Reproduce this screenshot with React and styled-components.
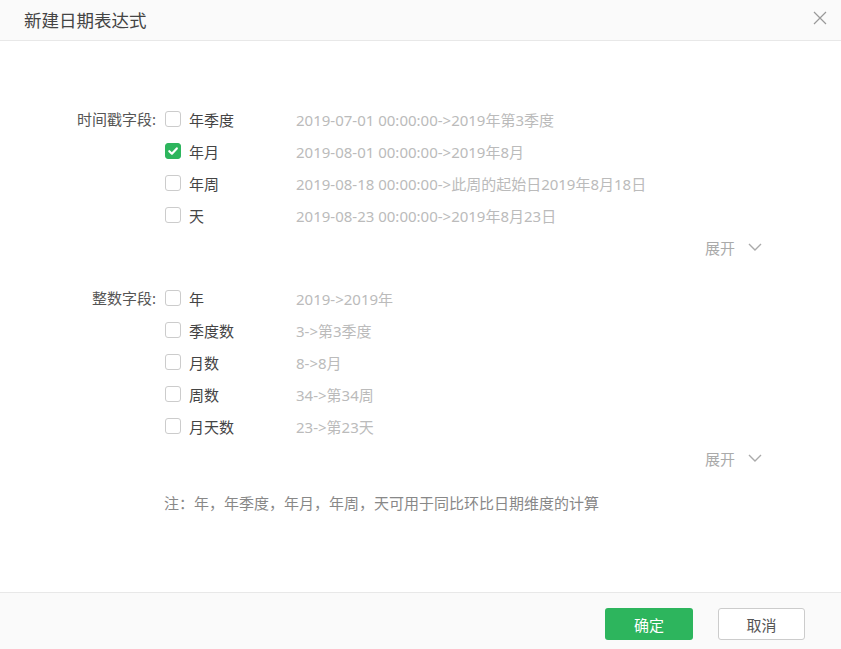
import React, { useState } from "react";
import styled, { createGlobalStyle } from "styled-components";

const GlobalStyle = createGlobalStyle`
  html, body {
    margin: 0;
    padding: 0;
    background: #fff;
  }
  body {
    font-family: "Noto Sans", "Noto Sans CJK SC", sans-serif;
    font-size: 15px;
    color: #333;
  }
`;

const timestampFields = [
  { name: "年季度", example: "2019-07-01 00:00:00->2019年第3季度" },
  { name: "年月", example: "2019-08-01 00:00:00->2019年8月", checked: true },
  { name: "年周", example: "2019-08-18 00:00:00->此周的起始日2019年8月18日" },
  { name: "天", example: "2019-08-23 00:00:00->2019年8月23日" },
];

const integerFields = [
  { name: "年", example: "2019->2019年" },
  { name: "季度数", example: "3->第3季度" },
  { name: "月数", example: "8->8月" },
  { name: "周数", example: "34->第34周" },
  { name: "月天数", example: "23->第23天" },
];

function Checkbox({ checked, onClick }) {
  return (
    <Box $checked={checked} onClick={onClick}>
      {checked && (
        <svg width="12" height="12" viewBox="0 0 12 12">
          <path
            d="M2.3 6.2 L4.9 8.7 L9.8 3.4"
            fill="none"
            stroke="#fff"
            strokeWidth="2.2"
            strokeLinecap="round"
            strokeLinejoin="round"
          />
        </svg>
      )}
    </Box>
  );
}

function FieldGroup({ label, fields }) {
  const [state, setState] = useState(fields.map((f) => !!f.checked));
  const toggle = (i) => setState((s) => s.map((v, j) => (j === i ? !v : v)));

  return (
    <Group>
      <GroupLabel>{label}</GroupLabel>
      <Options>
        {fields.map((f, i) => (
          <OptionRow key={f.name}>
            <Checkbox checked={state[i]} onClick={() => toggle(i)} />
            <OptionName>{f.name}</OptionName>
            <Example>{f.example}</Example>
          </OptionRow>
        ))}
        <ExpandRow>
          <span>展开</span>
          <svg width="16" height="10" viewBox="0 0 16 10">
            <path d="M2 2 L8 8 L14 2" fill="none" stroke="#aaa" strokeWidth="1.4" />
          </svg>
        </ExpandRow>
      </Options>
    </Group>
  );
}

export default function App() {
  return (
    <>
      <GlobalStyle />
      <Dialog>
        <Header>
          <Title>新建日期表达式</Title>
          <CloseButton>
            <svg width="14" height="14" viewBox="0 0 14 14">
              <path d="M1 1 L13 13 M13 1 L1 13" stroke="#999" strokeWidth="1.2" />
            </svg>
          </CloseButton>
        </Header>
        <Body>
          <FieldGroup label="时间戳字段:" fields={timestampFields} />
          <FieldGroup label="整数字段:" fields={integerFields} />
          <Note>注：年，年季度，年月，年周，天可用于同比环比日期维度的计算</Note>
        </Body>
        <Footer>
          <PrimaryButton>确定</PrimaryButton>
          <DefaultButton>取消</DefaultButton>
        </Footer>
      </Dialog>
    </>
  );
}

const Dialog = styled.div`
  width: 841px;
  height: 649px;
  display: flex;
  flex-direction: column;
  background: #fff;
`;

const Header = styled.div`
  height: 40px;
  flex-shrink: 0;
  display: flex;
  align-items: center;
  justify-content: space-between;
  padding: 0 14px 0 24px;
  background: #fafafa;
  border-bottom: 1px solid #e8e8e8;
`;

const Title = styled.div`
  font-size: 17.5px;
  color: #444;
  margin-top: -2px;
`;

const CloseButton = styled.div`
  width: 14px;
  height: 14px;
  display: flex;
  cursor: pointer;
  margin-top: -4px;
`;

const Body = styled.div`
  flex: 1;
  padding-top: 62px;
  display: flex;
  flex-direction: column;
  gap: 19px;
`;

const Group = styled.div`
  display: flex;
  align-items: flex-start;
`;

const GroupLabel = styled.div`
  width: 156px;
  height: 32px;
  line-height: 32px;
  text-align: right;
  color: #555;
`;

const Options = styled.div`
  margin-left: 9px;
  width: 598px;
  display: flex;
  flex-direction: column;
`;

const OptionRow = styled.div`
  height: 32px;
  display: flex;
  align-items: center;
`;

const Box = styled.span`
  width: 16px;
  height: 16px;
  box-sizing: border-box;
  flex-shrink: 0;
  border-radius: 3px;
  border: 1px solid ${(p) => (p.$checked ? "#2db55d" : "#ccc")};
  background: ${(p) => (p.$checked ? "#2db55d" : "#fff")};
  display: flex;
  align-items: center;
  justify-content: center;
  cursor: pointer;
`;

const OptionName = styled.span`
  width: 107px;
  margin-left: 8px;
  color: #444;
`;

const Example = styled.span`
  color: #bbb;
`;

const ExpandRow = styled.div`
  height: 32px;
  display: flex;
  align-items: center;
  justify-content: flex-end;
  gap: 12px;
  color: #aaa;
`;

const Note = styled.div`
  padding-left: 164px;
  line-height: 20px;
  color: #888;
`;

const Footer = styled.div`
  height: 57px;
  flex-shrink: 0;
  border-top: 1px solid #e8e8e8;
  background: #fafafa;
  display: flex;
  justify-content: flex-end;
  align-items: flex-start;
  padding: 15px 36px 0 0;
  gap: 25px;
  box-sizing: border-box;
`;

const PrimaryButton = styled.button`
  width: 88px;
  height: 32px;
  border: none;
  border-radius: 3px;
  background: #2db55d;
  color: #fff;
  font-family: inherit;
  font-size: 15px;
  cursor: pointer;
`;

const DefaultButton = styled.button`
  width: 87px;
  height: 32px;
  border: 1px solid #ccc;
  border-radius: 3px;
  background: #fff;
  color: #555;
  font-family: inherit;
  font-size: 15px;
  cursor: pointer;
`;
